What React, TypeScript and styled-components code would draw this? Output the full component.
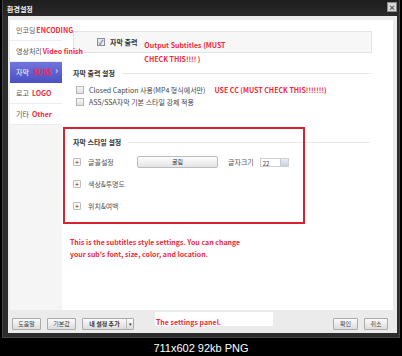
import * as React from 'react';
import styled, { createGlobalStyle } from 'styled-components';

const GlobalStyle = createGlobalStyle`
  body {
    margin: 0;
    background: #000;
  }
`;

const KR = `'Noto Sans CJK KR', 'Noto Sans', sans-serif`;

const Page = styled.div`
  width: 402px;
  height: 356px;
  background: #000;
  font-family: ${KR};
  overflow: hidden;
`;

const Window = styled.div`
  margin-left: 2px;
  width: 398px;
  height: 338px;
  box-sizing: border-box;
  background: #2c2c2c;
  border: 1px solid #444;
  border-top: none;
  display: flex;
  flex-direction: column;
`;

const TitleBar = styled.div`
  height: 16px;
  display: flex;
  align-items: center;
  justify-content: space-between;
  padding: 1px 2px 0 4px;
  box-sizing: border-box;
  background: linear-gradient(#1e1e1e, #2a2a2a);
  color: #f2f2f2;
  font-size: 7px;
  font-weight: 700;
`;

const CloseButton = styled.div`
  width: 8px;
  height: 8px;
  margin-top: -4px;
  background: #d8d8d8;
  border: 1px solid #888;
  color: #333;
  font-size: 7px;
  line-height: 8px;
  text-align: center;
`;

const Body = styled.div`
  flex: 1;
  margin: 0 2px 4px 5px;
  background: #ebebeb;
  padding: 4px 4px 0 2px;
  display: flex;
  flex-direction: column;
`;

const Main = styled.div`
  height: 290px;
  display: flex;
`;

const Sidebar = styled.div`
  width: 52px;
  background: #f5f5f5;
  display: flex;
  flex-direction: column;
`;

const NavItem = styled.div<{ $active?: boolean }>`
  height: 20px;
  display: flex;
  align-items: center;
  padding-left: 6px;
  position: relative;
  white-space: nowrap;
  font-size: 7px;
  color: ${p => (p.$active ? '#fff' : '#555')};
  background: ${p =>
    p.$active ? 'linear-gradient(#7275dc, #4c51c4)' : '#fff'};
  border-bottom: 1px solid ${p => (p.$active ? '#4c51c4' : '#ececec')};
  z-index: 2;

  &:after {
    content: ${p => (p.$active ? "'›'" : 'none')};
    position: absolute;
    right: 4px;
    top: 4px;
    font-size: 9px;
    line-height: 10px;
    color: #fff;
  }
`;

const Note = styled.span<{ $gap?: number }>`
  color: #f5283c;
  font-weight: 700;
  font-size: 7px;
  margin-left: ${p => p.$gap ?? 3}px;
  white-space: nowrap;
`;

const Panel = styled.div`
  flex: 1;
  background: #fff;
  padding: 11px 21px 0 11px;
  position: relative;
`;

const OutputBox = styled.div`
  height: 20px;
  display: flex;
  align-items: center;
  padding-left: 23px;
  background: #f7f7f7;
  border: 1px solid #e3e3e3;
`;

const OutputNote = styled.div`
  color: #f5283c;
  font-weight: 700;
  font-size: 7px;
  line-height: 14px;
  margin: 6px 0 0 7px;
  align-self: flex-start;
`;

const Heading = styled.div<{ $top: number; $right?: number }>`
  display: flex;
  align-items: center;
  height: 10px;
  margin-top: ${p => p.$top}px;
  margin-right: ${p => p.$right ?? 0}px;
  font-size: 7px;
  font-weight: 700;
  color: #333;

  &:after {
    content: '';
    flex: 1;
    margin-left: 7px;
    border-top: 1px solid #e8e8e8;
  }
`;

const CheckRow = styled.div<{ $top: number }>`
  display: flex;
  align-items: center;
  height: 10px;
  margin-top: ${p => p.$top}px;
  padding-left: 3px;
  font-size: 7px;
  color: #444;
  white-space: nowrap;
`;

const Check = styled.span<{ $checked?: boolean }>`
  width: 6px;
  height: 6px;
  margin-right: 5px;
  border: 1px solid ${p => (p.$checked ? '#8c8c9c' : '#b8b8b8')};
  background: ${p =>
    p.$checked ? '#e6e8f2' : 'linear-gradient(#fafafa, #dedede)'};
  color: #3b4a8a;
  font-size: 7px;
  line-height: 6px;
  text-align: center;
  flex: none;
`;

const Label = styled.span<{ $bold?: boolean }>`
  font-size: 7px;
  font-weight: ${p => (p.$bold ? 700 : 400)};
  color: #333;
  white-space: nowrap;
`;

const StyleRow = styled.div<{ $top: number }>`
  display: flex;
  align-items: center;
  height: 12px;
  margin-top: ${p => p.$top}px;
  font-size: 7px;
  color: #555;
`;

const Expander = styled.span`
  width: 6px;
  height: 6px;
  border: 1px solid #bdbdbd;
  border-radius: 1px;
  background: #fafafa;
  color: #333;
  font-size: 7px;
  line-height: 6px;
  text-align: center;
  margin-right: 7px;
  flex: none;
`;

const RowLabel = styled.span`
  width: 49px;
`;

const FontButton = styled.div`
  width: 79px;
  height: 10px;
  border: 1px solid #bcbcbc;
  border-radius: 2px;
  background: linear-gradient(#fdfdfd, #e4e4e4);
  font-size: 6px;
  line-height: 10px;
  text-align: center;
  color: #333;
  margin-right: 10px;
`;

const Spinner = styled.div`
  width: 29px;
  height: 9px;
  margin-left: 6px;
  border: 1px solid #d0d0d0;
  display: flex;
  font-size: 6px;
  line-height: 9px;
  color: #444;
  padding-left: 2px;
  box-sizing: border-box;

  span {
    flex: 1;
  }

  i {
    width: 7px;
    background: linear-gradient(#e8ecf4, #c8d0e0);
    border-left: 1px solid #c0c8d8;
  }
`;

const RedFrame = styled.div`
  position: absolute;
  left: 1px;
  top: 107px;
  width: 242px;
  height: 97px;
  box-sizing: border-box;
  border: 2px solid #d8212e;
  pointer-events: none;
`;

const Explain = styled.div`
  margin: 24px 0 0 -3px;
  color: #f5283c;
  font-weight: 700;
  font-size: 7px;
  line-height: 12px;
`;

const Footer = styled.div`
  flex: 1;
  display: flex;
  align-items: flex-start;
  padding: 2px 5px 0 2px;
`;

const Button = styled.div<{ $w: number; $bold?: boolean; $gap?: number }>`
  width: ${p => p.$w}px;
  height: 10px;
  margin-top: 6px;
  margin-left: ${p => p.$gap ?? 0}px;
  border: 1px solid #aaa;
  border-radius: 1px;
  background: linear-gradient(#fbfbfb, #dcdcdc);
  font-size: 6px;
  font-weight: ${p => (p.$bold ? 700 : 400)};
  line-height: 10px;
  text-align: center;
  color: #444;
  box-sizing: content-box;
`;

const SplitButton = styled.div`
  display: flex;
  margin: 6px 0 0 6px;
  border: 1px solid #aaa;
  border-radius: 1px;
  background: linear-gradient(#fbfbfb, #dcdcdc);
  height: 10px;
  font-size: 6px;
  line-height: 10px;
  color: #333;

  b {
    width: 43px;
    text-align: center;
  }

  span {
    width: 6px;
    border-left: 1px solid #bbb;
    text-align: center;
    font-size: 5px;
  }
`;

const PanelNote = styled.div`
  width: 118px;
  height: 14px;
  margin-left: 21px;
  background: #fff;
  color: #f5283c;
  font-weight: 700;
  font-size: 7px;
  line-height: 20px;
  padding-left: 1px;
  box-sizing: border-box;
`;

const Spacer = styled.div`
  flex: 1;
`;

const Caption = styled.div`
  height: 18px;
  line-height: 20px;
  text-align: center;
  color: #fff;
  font-family: 'Liberation Sans', Arial, sans-serif;
  font-size: 11px;
`;

const App = () => (
  <Page>
    <GlobalStyle />
    <Window>
      <TitleBar>
        <span>환경설정</span>
        <CloseButton>×</CloseButton>
      </TitleBar>
      <Body>
        <Main>
          <Sidebar>
            <NavItem>
              인코딩<Note $gap={1}>ENCODING</Note>
            </NavItem>
            <NavItem>
              영상처리<Note $gap={1}>Video finish</Note>
            </NavItem>
            <NavItem $active>
              자막<Note $gap={4}>SUBS</Note>
            </NavItem>
            <NavItem>
              로고<Note>LOGO</Note>
            </NavItem>
            <NavItem>
              기타<Note>Other</Note>
            </NavItem>
          </Sidebar>
          <Panel>
            <OutputBox>
              <Check $checked>✓</Check>
              <Label $bold>자막 출력</Label>
              <OutputNote>
                Output Subtitles (MUST
                <br />
                CHECK THIS!!!! )
              </OutputNote>
            </OutputBox>
            <Heading $top={15}>자막 출력 설정</Heading>
            <CheckRow $top={7}>
              <Check />
              Closed Caption 사용(MP4 형식에서만)
              <Note $gap={9}>USE CC (MUST CHECK THIS!!!!!!!)</Note>
            </CheckRow>
            <CheckRow $top={2}>
              <Check />
              ASS/SSA자막 기본 스타일 강제 적용
            </CheckRow>
            <Heading $top={30} $right={2}>
              자막 스타일 설정
            </Heading>
            <StyleRow $top={9}>
              <Expander>+</Expander>
              <RowLabel>글꼴설정</RowLabel>
              <FontButton>굴림</FontButton>
              글자크기
              <Spinner>
                <span>22</span>
                <i />
              </Spinner>
            </StyleRow>
            <StyleRow $top={10}>
              <Expander>+</Expander>
              색상&amp;투명도
            </StyleRow>
            <StyleRow $top={10}>
              <Expander>+</Expander>
              위치&amp;여백
            </StyleRow>
            <Explain>
              This is the subtitles style settings. You can change
              <br />
              your sub's font, size, color, and location.
            </Explain>
            <RedFrame />
          </Panel>
        </Main>
        <Footer>
          <Button $w={27}>도움말</Button>
          <Button $w={27} $gap={6}>
            기본값
          </Button>
          <SplitButton>
            <b>내 설정 추가</b>
            <span>▾</span>
          </SplitButton>
          <PanelNote>The settings panel.</PanelNote>
          <Spacer />
          <Button $w={23}>확인</Button>
          <Button $w={22} $gap={6}>
            취소
          </Button>
        </Footer>
      </Body>
    </Window>
    <Caption>711x602 92kb PNG</Caption>
  </Page>
);

export default App;
